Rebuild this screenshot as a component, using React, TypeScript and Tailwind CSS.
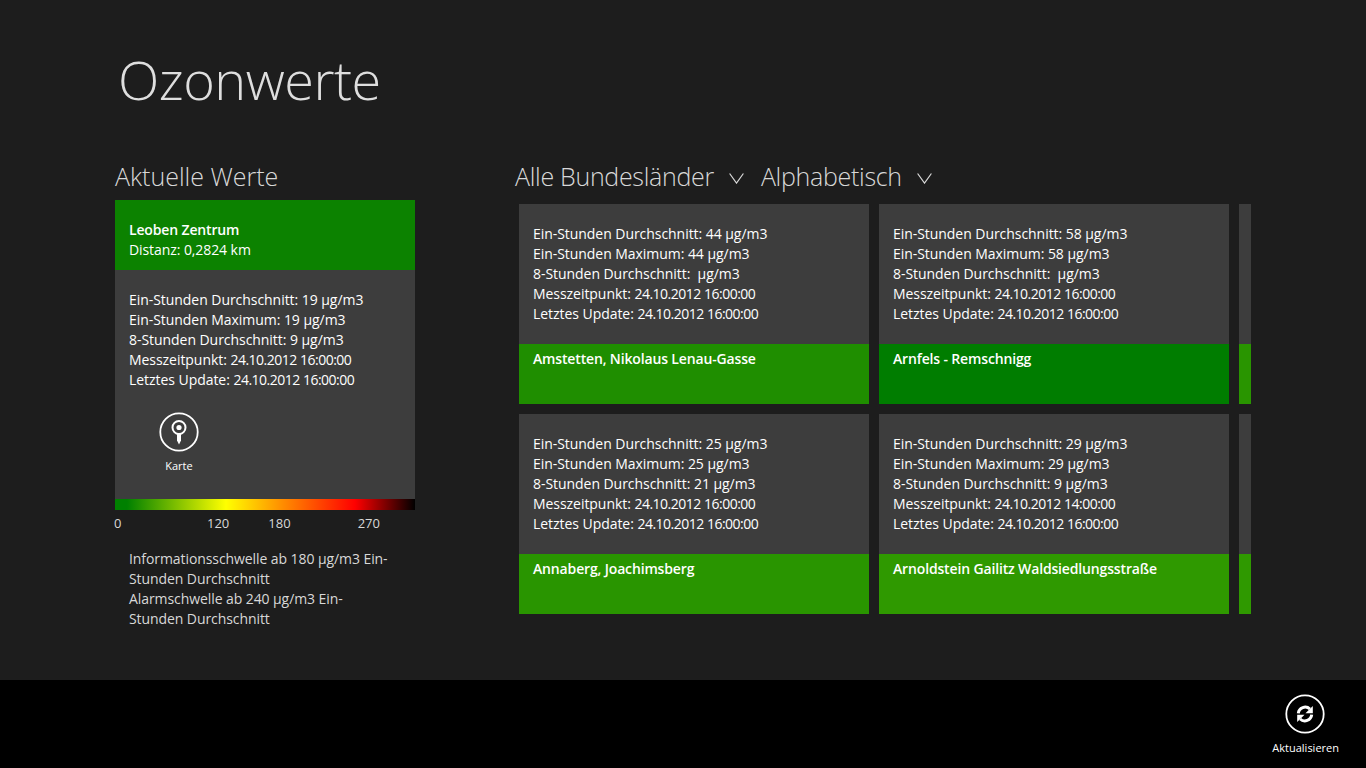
const font = { fontFamily: '"Open Sans", "Noto Sans", sans-serif' };

interface Station {
  name: string;
  avg: string;
  max: string;
  avg8: string;
  time: string;
  update: string;
  color: string;
}

const stations: Station[][] = [
  [
    { name: "Amstetten, Nikolaus Lenau-Gasse", avg: "44", max: "44", avg8: "", time: "16:00:00", update: "16:00:00", color: "bg-[#1f8e00]" },
    { name: "Annaberg, Joachimsberg", avg: "25", max: "25", avg8: "21", time: "16:00:00", update: "16:00:00", color: "bg-[#299500]" },
  ],
  [
    { name: "Arnfels - Remschnigg", avg: "58", max: "58", avg8: "", time: "16:00:00", update: "16:00:00", color: "bg-[#007d00]" },
    { name: "Arnoldstein Gailitz Waldsiedlungsstraße", avg: "29", max: "29", avg8: "9", time: "14:00:00", update: "16:00:00", color: "bg-[#2f9900]" },
  ],
];

function Values({ s }: { s: Pick<Station, "avg" | "max" | "avg8" | "time" | "update"> }) {
  return (
    <div className="text-[14px] leading-[20px] text-white whitespace-pre tracking-[-0.05px]">
      <p>Ein-Stunden Durchschnitt: {s.avg} µg/m3</p>
      <p>Ein-Stunden Maximum: {s.max} µg/m3</p>
      <p>8-Stunden Durchschnitt: {s.avg8} µg/m3</p>
      <p>Messzeitpunkt: <span className="tracking-[-0.5px]">24.10.2012 {s.time}</span></p>
      <p>Letztes Update: <span className="tracking-[-0.5px]">24.10.2012 {s.update}</span></p>
    </div>
  );
}

function StationCard({ s }: { s: Station }) {
  return (
    <div className="w-[350px] h-[200px] flex flex-col shrink-0">
      <div className="h-[140px] bg-[#3d3d3d] pl-[14px] pt-[20px]">
        <Values s={s} />
      </div>
      <div className={`h-[60px] pl-[14px] pt-[5px] text-[14px] leading-[20px] font-semibold text-white tracking-[-0.15px] ${s.color}`}>
        {s.name}
      </div>
    </div>
  );
}

// only the left edge of the next column is visible
function CutOffCard({ color }: { color: string }) {
  return (
    <div className="w-[12px] h-[200px] flex flex-col shrink-0">
      <div className="h-[140px] bg-[#3d3d3d]" />
      <div className={`h-[60px] ${color}`} />
    </div>
  );
}

function Chevron() {
  return (
    <svg width="15" height="11" viewBox="0 0 15 11" className="mt-[15px]" fill="none" stroke="#d8d8d8" strokeWidth="1.2">
      <path d="M.6.5l6.9 9.6L14.4.5" />
    </svg>
  );
}

export default function App() {
  return (
    <div className="w-[1366px] h-[768px] bg-[#1d1d1d] flex flex-col overflow-hidden" style={font}>
      <div className="h-[680px] pl-[115px]">
        <h1 className="pl-[3px] pt-[41px] h-[160px] text-[54px] leading-[76px] font-light text-[#dedede] tracking-[-0.5px]">Ozonwerte</h1>
        <div className="flex">
          <div className="w-[300px] shrink-0">
            <h2 className="text-[25px] leading-[36px] font-light text-[#d8d8d8] -mt-[2px] h-[42px]">Aktuelle Werte</h2>
            <div className="h-[70px] bg-[#0c8200] pl-[14px] pt-[20px] text-[14px] leading-[20px] text-white">
              <p className="font-semibold tracking-[-0.15px]">Leoben Zentrum</p>
              <p className="tracking-[-0.08px]">Distanz: 0,2824 km</p>
            </div>
            <div className="h-[229px] bg-[#3d3d3d] pl-[14px] pt-[20px]">
              <Values s={{ avg: "19", max: "19", avg8: "9", time: "16:00:00", update: "16:00:00" }} />
              <div className="w-[100px] mt-[22px] flex flex-col items-center">
                <svg width="40" height="40" viewBox="0 0 40 40" fill="none">
                  <circle cx="20" cy="20" r="18.7" stroke="#fff" strokeWidth="1.8" />
                  <circle cx="20" cy="15.5" r="6.5" stroke="#fff" strokeWidth="2" />
                  <circle cx="20" cy="15.5" r="2.6" fill="#fff" />
                  <path d="M18 21.5h4v7l-2 4-2-4z" fill="#fff" />
                </svg>
                <span className="text-[11px] leading-[16px] mt-[6px] text-white">Karte</span>
              </div>
            </div>
            <div className="h-[11px] bg-[linear-gradient(to_right,#008000_4%,#ffff00_37%,#ff8c00_56%,#ff0000_80%,#000000_100%)]" />
            <div className="flex text-[13px] leading-[18px] text-[#d8d8d8] mt-[4px] -ml-[1px]">
              <span className="w-[8px]">0</span>
              <span className="ml-[85px]">120</span>
              <span className="ml-[39px]">180</span>
              <span className="ml-[67px]">270</span>
            </div>
            <div className="pl-[14px] mt-[17px] text-[14px] leading-[20px] text-[#d8d8d8] tracking-[-0.08px]">
              <p>Informationsschwelle ab 180 µg/m3 Ein-<br />Stunden Durchschnitt</p>
              <p>Alarmschwelle ab 240 µg/m3 Ein-<br />Stunden Durchschnitt</p>
            </div>
          </div>
          <div className="ml-[100px]">
            <div className="h-[46px] -mt-[2px] flex text-[25px] leading-[36px] font-light text-[#d8d8d8] tracking-[-0.3px]">
              <span>Alle Bundesländer</span>
              <span className="ml-[15px]"><Chevron /></span>
              <span className="ml-[17px]">Alphabetisch</span>
              <span className="ml-[15px]"><Chevron /></span>
            </div>
            <div className="ml-[4px] flex gap-[10px]">
              {stations.map((col, i) => (
                <div key={i} className="flex flex-col gap-[10px] shrink-0">
                  {col.map((s) => <StationCard key={s.name} s={s} />)}
                </div>
              ))}
              <div className="flex flex-col gap-[10px] shrink-0">
                <CutOffCard color="bg-[#299500]" />
                <CutOffCard color="bg-[#2f9900]" />
              </div>
            </div>
          </div>
        </div>
      </div>
      <div className="h-[88px] bg-black flex justify-end pr-[27px] pt-[14px]">
        <div className="flex flex-col items-center">
          <svg width="40" height="40" viewBox="0 0 40 40" fill="none" className="-ml-[1px]">
            <circle cx="20" cy="20" r="18.7" stroke="#fff" strokeWidth="1.8" />
            <path d="M13.3 19.3a6.9 6.9 0 0 1 11.6-4.3" stroke="#fff" strokeWidth="3" />
            <path d="M27.8 12v7.3h-7.3z" fill="#fff" />
            <path d="M26.7 20.7a6.9 6.9 0 0 1-11.6 4.3" stroke="#fff" strokeWidth="3" />
            <path d="M12.2 28v-7.3h7.3z" fill="#fff" />
          </svg>
          <span className="text-[11px] leading-[16px] mt-[6px] text-white">Aktualisieren</span>
        </div>
      </div>
    </div>
  );
}
